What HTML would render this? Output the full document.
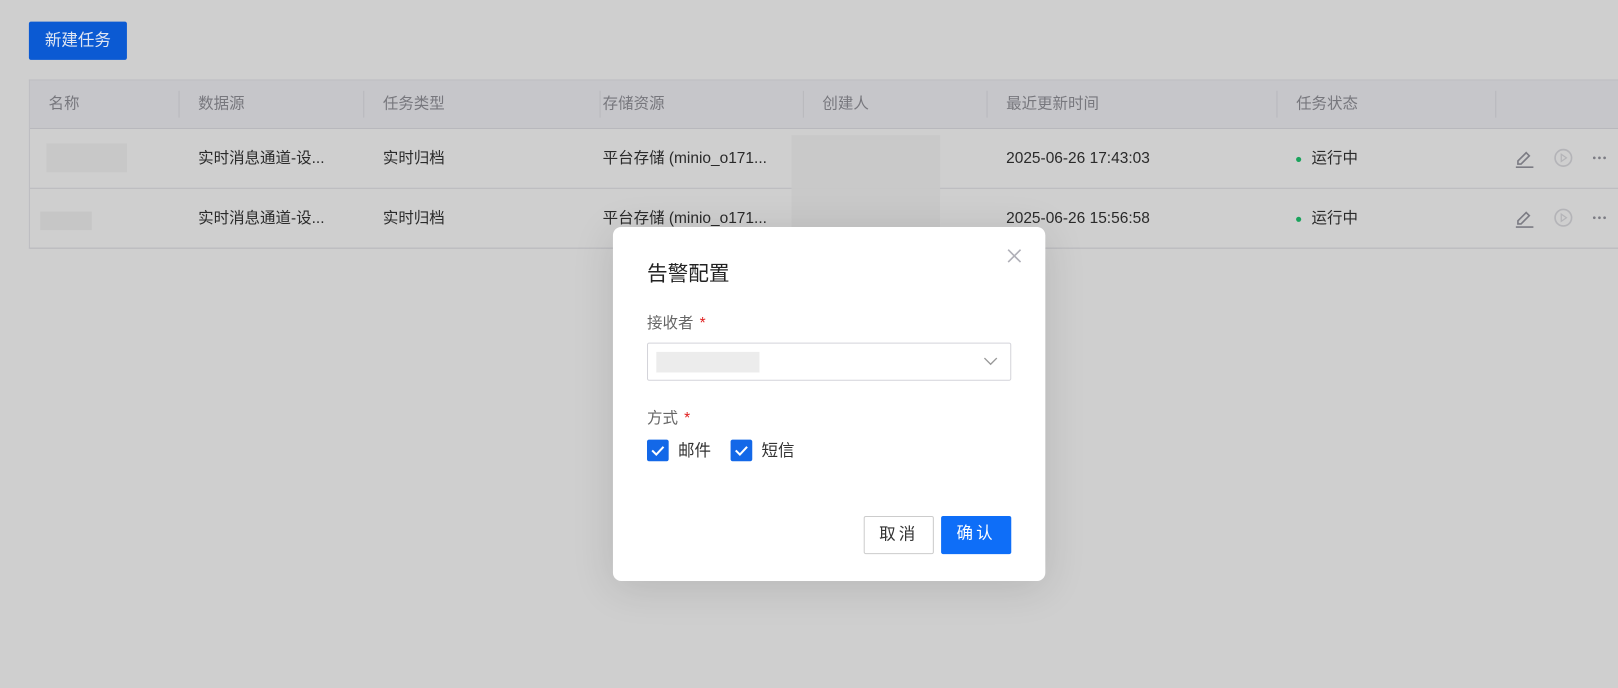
<!DOCTYPE html>
<html><head><meta charset="utf-8"><style>
*{box-sizing:border-box;margin:0;padding:0}
body{width:1618px;height:688px;background:#cfcfcf;font-family:"Liberation Sans","Noto Sans CJK SC",sans-serif;position:relative;overflow:hidden;color:#222}
#w{position:absolute;left:0;top:0;width:1568px;height:667px;transform:scale(1.0319);transform-origin:0 0}
.btn-new{position:absolute;left:28px;top:21px;width:95px;height:37px;background:#0b5ad3;color:#dfe6f2;font-size:16px;line-height:37px;text-align:center;border-radius:2px}
.table{position:absolute;left:28px;top:77px;width:1545px;height:164px;border:1px solid #bdbdc2;border-right:none}
.hdr{position:absolute;left:0;top:0;right:0;height:47px;background:#c6c6ca;border-bottom:1px solid #b8b8bd}
.hdr span{position:absolute;top:12px;font-size:15px;line-height:22px;color:#77777d}
.sep{position:absolute;top:10px;width:1px;height:26px;background:#b8b8bd}
.row{position:absolute;left:0;right:0;height:58px;border-bottom:1px solid #bababe;font-size:15px;color:#2a2a2a}
.row span{position:absolute;top:18px;line-height:22px}
.blur{position:absolute;background:#c2c2c2}
.dot{position:absolute;width:5px;height:5px;border-radius:50%;background:#1aa35c;top:27px}
.modal{position:absolute;left:594px;top:220px;width:419px;height:343px;background:#fff;border-radius:8px;box-shadow:0 6px 40px rgba(0,0,0,0.12)}
.modal .t{position:absolute;left:33px;top:32px;font-size:20px;line-height:28px;color:#222}
.lbl{position:absolute;left:33px;font-size:15px;line-height:22px;color:#666}
.lbl i{color:#e02020;font-style:normal;margin-left:6px}
.sel{position:absolute;left:33px;top:112px;width:353px;height:37px;border:1px solid #d4d4da;border-radius:2px}
.cb{position:absolute;top:206px;width:21px;height:21px;background:#1368e8;border-radius:2px}
.cbl{position:absolute;top:207px;font-size:16px;line-height:22px;color:#333}
.b{position:absolute;top:280px;height:37px;font-size:16px;line-height:36px;text-align:center;border-radius:2px;letter-spacing:3px}
</style></head><body><div id="w">
<div class="btn-new">新建任务</div>
<div class="table">
 <div class="hdr">
  <span style="left:18px">名称</span><div class="sep" style="left:144px"></div>
  <span style="left:163px">数据源</span><div class="sep" style="left:323px"></div>
  <span style="left:342px">任务类型</span><div class="sep" style="left:552px"></div>
  <span style="left:555px">存储资源</span><div class="sep" style="left:749px"></div>
  <span style="left:768px">创建人</span><div class="sep" style="left:927px"></div>
  <span style="left:946px">最近更新时间</span><div class="sep" style="left:1208px"></div>
  <span style="left:1227px">任务状态</span><div class="sep" style="left:1420px"></div>
 </div>
 <div class="row" style="top:47px">
  <div class="blur" style="left:16px;top:14px;width:78px;height:28px;background:#c8c8c8"></div>
  <span style="left:163px">实时消息通道-设...</span>
  <span style="left:342px">实时归档</span>
  <span style="left:555px">平台存储 (minio_o171...</span>
  <div class="blur" style="left:738px;top:6px;width:144px;height:52px;background:#c9c9c9"></div>
  <span style="left:946px">2025-06-26 17:43:03</span>
  <div class="dot" style="left:1227px"></div><span style="left:1242px">运行中</span>
 </div>
 <div class="row" style="top:105px">
  <div class="blur" style="left:10px;top:22px;width:50px;height:18px;background:#c6c6c6"></div>
  <span style="left:163px">实时消息通道-设...</span>
  <span style="left:342px">实时归档</span>
  <span style="left:555px">平台存储 (minio_o171...</span>
  <div class="blur" style="left:738px;top:0;width:144px;height:38px;background:#c9c9c9"></div>
  <span style="left:946px">2025-06-26 15:56:58</span>
  <div class="dot" style="left:1227px"></div><span style="left:1242px">运行中</span>
 </div>
</div>
<svg style="position:absolute;left:1466px;top:141px" width="100" height="100" fill="none" stroke-width="1.6">
 <g stroke="#7c7c84"><path d="M5 15 L13 7 L16 10 L8 18 L5 18Z"/><path d="M3 21H20"/></g>
 <circle cx="49" cy="12" r="8" stroke="#b4b4b8"/><path d="M47 8.5 L52 12 L47 15.5Z" stroke="#b4b4b8" stroke-width="1.2"/>
 <g fill="#7c7c84" stroke="none"><circle cx="79" cy="12" r="1.3"/><circle cx="84" cy="12" r="1.3"/><circle cx="89" cy="12" r="1.3"/></g>
 <g transform="translate(0,58)">
 <g stroke="#7c7c84"><path d="M5 15 L13 7 L16 10 L8 18 L5 18Z"/><path d="M3 21H20"/></g>
 <circle cx="49" cy="12" r="8" stroke="#b4b4b8"/><path d="M47 8.5 L52 12 L47 15.5Z" stroke="#b4b4b8" stroke-width="1.2"/>
 <g fill="#7c7c84" stroke="none"><circle cx="79" cy="12" r="1.3"/><circle cx="84" cy="12" r="1.3"/><circle cx="89" cy="12" r="1.3"/></g></g>
</svg>
<div class="modal">
 <svg style="position:absolute;left:382px;top:21px" width="14" height="14" stroke="#b0b0b8" stroke-width="1.6"><path d="M1 1L13 13M13 1L1 13"/></svg>
 <div class="t">告警配置</div>
 <div class="lbl" style="top:83px">接收者<i>*</i></div>
 <div class="sel">
  <div style="position:absolute;left:8px;top:8px;width:100px;height:20px;background:#ececec"></div>
  <svg style="position:absolute;right:12px;top:12px" width="14" height="10" fill="none" stroke="#999" stroke-width="1.3"><path d="M1 2L7 8L13 2"/></svg>
 </div>
 <div class="lbl" style="top:175px">方式<i>*</i></div>
 <div class="cb" style="left:33px"><svg width="21" height="21" fill="none" stroke="#fff" stroke-width="2"><path d="M5 10.5L9 14.5L16 7"/></svg></div>
 <div class="cbl" style="left:63px">邮件</div>
 <div class="cb" style="left:114px"><svg width="21" height="21" fill="none" stroke="#fff" stroke-width="2"><path d="M5 10.5L9 14.5L16 7"/></svg></div>
 <div class="cbl" style="left:144px">短信</div>
 <div class="b" style="left:243px;width:68px;border:1px solid #ccc;color:#333">取消</div>
 <div class="b" style="left:318px;width:68px;background:#0e6ef8;color:#fff">确认</div>
</div>
</div></body></html>
